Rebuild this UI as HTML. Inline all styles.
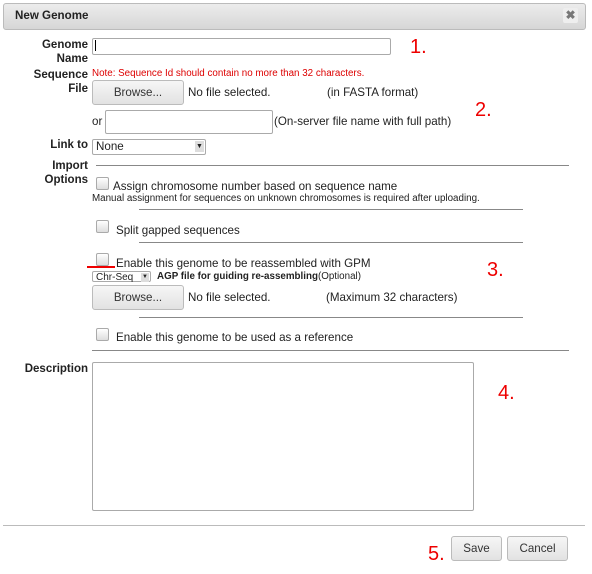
<!DOCTYPE html><html><head><style>
body{margin:0;width:592px;height:574px;background:#fff;font-family:"Liberation Sans",sans-serif;font-size:11.6px;color:#222;position:relative;overflow:hidden}
.a{position:absolute;white-space:nowrap}
.lb{font-weight:bold;font-size:11.5px;text-align:right;width:88px;left:0;line-height:14px}
.in{position:absolute;border:1px solid #aaa;border-radius:2px;background:#fff}
.btn{position:absolute;border:1px solid #bbb;border-radius:3px;background:linear-gradient(#f6f6f6,#e2e2e2);text-align:center;font-size:11.6px;color:#333;box-sizing:border-box}
.cb{position:absolute;width:11px;height:11px;border:1px solid #aaa;border-radius:2px;background:linear-gradient(#fff,#ddd)}
.ln{position:absolute;height:1px;background:#888}
.n{position:absolute;color:#e00;font-size:20px}
</style></head><body>
<div class="a" style="left:3px;top:3px;width:581px;height:25px;border:1px solid #bbb;border-radius:3px;background:linear-gradient(#ececec,#d6d6d6)"></div>
<div class="a" style="left:15px;top:9px;font-weight:bold;font-size:11.6px;color:#222">New Genome</div>
<div class="a" style="left:563px;top:8px;width:15px;height:15px;background:#eee;border-radius:2px;text-align:center;line-height:15px;font-weight:bold;color:#777;font-size:12px">✖</div>

<div class="a lb" style="top:38px">Genome<br>Name</div>
<div class="in" style="left:92px;top:38px;width:297px;height:15px"></div>
<div class="a" style="left:95px;top:40px;width:1px;height:11px;background:#000"></div>
<div class="n" style="left:410px;top:36px">1.</div>

<div class="a lb" style="top:68px">Sequence<br>File</div>
<div class="a" style="left:92px;top:68px;color:#d00;font-size:9.8px">Note: Sequence Id should contain no more than 32 characters.</div>
<div class="btn" style="left:92px;top:80px;width:92px;height:25px;line-height:23px">Browse...</div>
<div class="a" style="left:188px;top:86px">No file selected.</div>
<div class="a" style="left:327px;top:86px">(in FASTA format)</div>
<div class="n" style="left:475px;top:99px">2.</div>
<div class="a" style="left:92px;top:115px">or</div>
<div class="in" style="left:105px;top:110px;width:166px;height:22px"></div>
<div class="a" style="left:274px;top:115px">(On-server file name with full path)</div>

<div class="a lb" style="top:138px">Link to</div>
<div class="in" style="left:92px;top:139px;height:14px;font-size:11.6px;line-height:14px;padding-left:3px;box-sizing:content-box;width:109px">None<span style="position:absolute;right:1px;top:1px;width:9px;height:11px;background:#ddd;font-size:7px;line-height:11px;text-align:center">▼</span></div>

<div class="a lb" style="top:159px">Import<br>Options</div>
<div class="ln" style="left:96px;top:165px;width:473px"></div>
<div class="cb" style="left:96px;top:177px"></div>
<div class="a" style="left:113px;top:180px">Assign chromosome number based on sequence name</div>
<div class="a" style="left:92px;top:193px;font-size:9.8px">Manual assignment for sequences on unknown chromosomes is required after uploading.</div>
<div class="ln" style="left:139px;top:209px;width:384px"></div>
<div class="cb" style="left:96px;top:220px"></div>
<div class="a" style="left:116px;top:224px">Split gapped sequences</div>
<div class="ln" style="left:139px;top:242px;width:384px"></div>
<div class="cb" style="left:96px;top:253px"></div>
<div class="a" style="left:116px;top:257px">Enable this genome to be reassembled with GPM</div>
<div class="a" style="left:87px;top:266px;width:28px;height:2px;background:#e00"></div>
<div class="n" style="left:487px;top:259px">3.</div>
<div class="in" style="left:92px;top:271px;width:59px;height:11px;font-size:10px;line-height:11px;padding-left:3px;box-sizing:border-box">Chr-Seq<span style="position:absolute;right:1px;top:1px;width:8px;height:9px;background:#ddd;font-size:6px;line-height:9px;text-align:center">▼</span></div>
<div class="a" style="left:157px;top:271px;font-size:9.8px"><b>AGP file for guiding re-assembling</b>(Optional)</div>
<div class="btn" style="left:92px;top:285px;width:92px;height:25px;line-height:23px">Browse...</div>
<div class="a" style="left:188px;top:291px">No file selected.</div>
<div class="a" style="left:326px;top:291px">(Maximum 32 characters)</div>
<div class="ln" style="left:139px;top:317px;width:384px"></div>
<div class="cb" style="left:96px;top:328px"></div>
<div class="a" style="left:116px;top:331px">Enable this genome to be used as a reference</div>
<div class="ln" style="left:92px;top:350px;width:477px"></div>

<div class="a lb" style="top:362px">Description</div>
<div class="in" style="left:92px;top:362px;width:380px;height:147px"></div>
<div class="n" style="left:498px;top:382px">4.</div>

<div class="ln" style="left:3px;top:525px;width:582px;background:#bbb"></div>
<div class="n" style="left:428px;top:543px">5.</div>
<div class="btn" style="left:451px;top:536px;width:51px;height:25px;line-height:23px">Save</div>
<div class="btn" style="left:507px;top:536px;width:61px;height:25px;line-height:23px">Cancel</div>
</body></html>
